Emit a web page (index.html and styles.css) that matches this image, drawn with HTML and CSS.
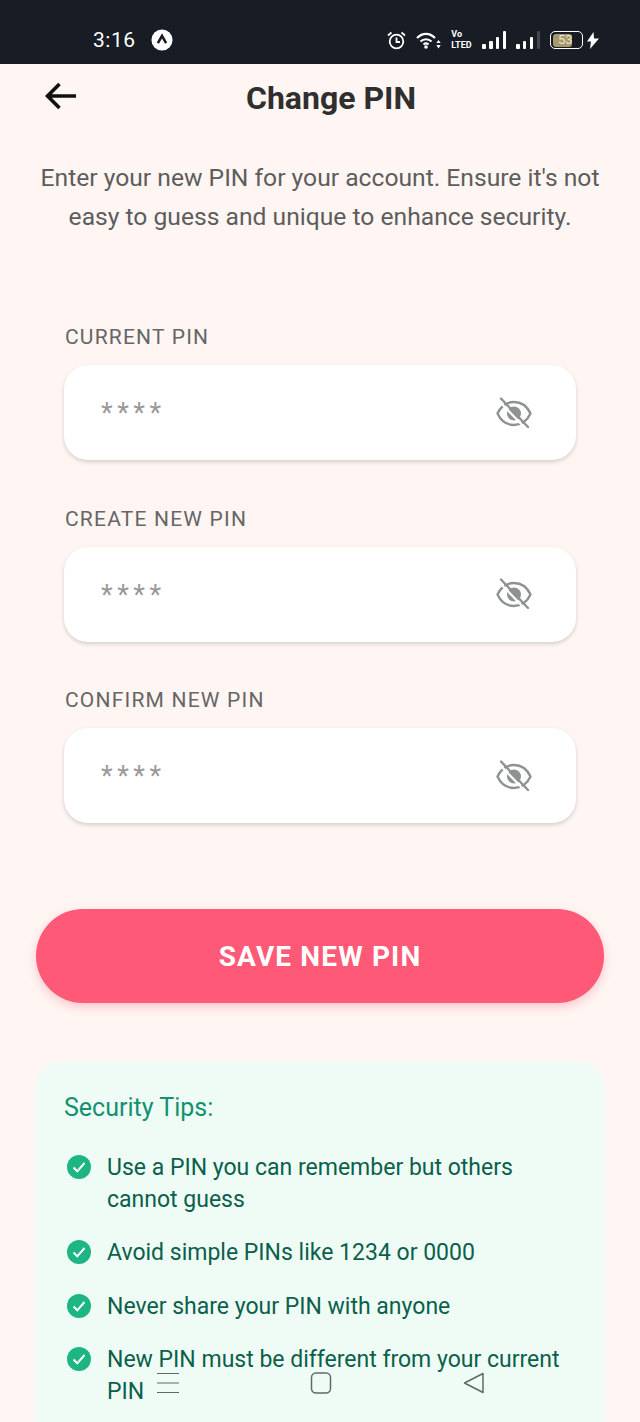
FILE: index.html
```html
<!DOCTYPE html>
<html lang="en">
<head>
  <meta charset="UTF-8">
  <meta name="viewport" content="width=device-width, initial-scale=1.0">
  <title>Change PIN</title>
  <link rel="stylesheet" href="styles.css">
</head>
<body>
  <div class="status-bar">
    <div class="status-left">
      <span class="clock">3:16</span>
      <svg class="status-badge" viewBox="0 0 24 24" width="22" height="22">
        <circle cx="12" cy="12" r="11.5" fill="#fff"/>
        <path d="M7.500 15.500 12 7.500l4.500 8" fill="none" stroke="#181c24" stroke-width="2.800"/>
      </svg>
    </div>
    <div class="status-right">
      <svg viewBox="0 0 19 19" width="19" height="19" fill="none" stroke="#fff" stroke-width="1.800">
        <circle cx="9.500" cy="10.500" r="6.800"/>
        <path d="M9.500 6.500V11H13M1 4.500 4.500 1.500M18 4.500 14.500 1.500"/>
      </svg>
      <svg viewBox="0 0 25 17" width="25" height="17" fill="none" stroke="#fff" stroke-width="2.200">
        <path d="M1 6C6.500 .5 13.500 .5 19 6M4.500 9.500C7.500 6.500 12.500 6.500 15.500 9.500M7.500 12.500c1.500-1.300 3.500-1.300 5 0"/>
        <circle cx="10" cy="15" r="1.800" fill="#fff" stroke="none"/>
        <path d="M22.500 8l2.200 3h-4.400zM22.500 16.500l2.200-3.500h-4.400z" fill="#fff" stroke="none"/>
      </svg>
      <div class="volte">
        <span>Vo</span>
        <span>LTED</span>
      </div>
      <div class="signal">
        <i class="bar-1"></i><i class="bar-2"></i><i class="bar-3"></i><i class="bar-4"></i>
      </div>
      <div class="signal">
        <i class="bar-1"></i><i class="bar-2"></i><i class="bar-3"></i><i class="bar-4 bar-off"></i>
      </div>
      <div class="battery">
        <div class="battery-fill"></div>
        <span class="battery-level">53</span>
      </div>
      <svg class="bolt" viewBox="0 0 12 17" width="12" height="17">
        <path d="M6.500 0 0 9.500h4L3 17 12 6.500H7z" fill="#fff"/>
      </svg>
    </div>
  </div>

  <main class="page">
    <header class="top-bar">
      <svg class="back-icon" viewBox="0 0 32 28" width="32" height="28" fill="none" stroke="#111" stroke-width="3.600">
        <path d="M31 14H3M14.500 2 2.500 14l12 12"/>
      </svg>
      <h1>Change PIN</h1>
    </header>

    <p class="intro">Enter your new PIN for your account. Ensure it's not easy to guess and unique to enhance security.</p>

    <form class="pin-form">
      <div class="field">
        <label>CURRENT PIN</label>
        <div class="pin-input">
          <span class="pin-mask">****</span>
          <svg class="eye-icon" viewBox="0 0 36 32"><use href="#eye-off"/></svg>
        </div>
      </div>
      <div class="field">
        <label>CREATE NEW PIN</label>
        <div class="pin-input">
          <span class="pin-mask">****</span>
          <svg class="eye-icon" viewBox="0 0 36 32"><use href="#eye-off"/></svg>
        </div>
      </div>
      <div class="field">
        <label>CONFIRM NEW PIN</label>
        <div class="pin-input">
          <span class="pin-mask">****</span>
          <svg class="eye-icon" viewBox="0 0 36 32"><use href="#eye-off"/></svg>
        </div>
      </div>
    </form>

    <button class="save-btn" type="button">SAVE NEW PIN</button>

    <section class="tips">
      <h2>Security Tips:</h2>
      <ul>
        <li><svg class="check" viewBox="0 0 24 24"><use href="#check"/></svg><span>Use a PIN you can remember but others cannot guess</span></li>
        <li><svg class="check" viewBox="0 0 24 24"><use href="#check"/></svg><span>Avoid simple PINs like 1234 or 0000</span></li>
        <li><svg class="check" viewBox="0 0 24 24"><use href="#check"/></svg><span>Never share your PIN with anyone</span></li>
        <li><svg class="check" viewBox="0 0 24 24"><use href="#check"/></svg><span>New PIN must be different from your current PIN</span></li>
      </ul>
    </section>
  </main>

  <!-- system nav floats over the page -->
  <div class="nav-bar">
    <svg viewBox="0 0 24 24" width="24" height="24" fill="none" stroke="#5c6b66" stroke-width="1.200">
      <path d="M1 2.500H23M1 12H23M1 21.500H23"/>
    </svg>
    <svg viewBox="0 0 24 24" width="24" height="24" fill="none" stroke="#5c6b66" stroke-width="1.500">
      <rect x="2.500" y="2" width="19" height="20" rx="4.500"/>
    </svg>
    <svg viewBox="0 0 24 24" width="24" height="24" fill="none" stroke="#5c6b66" stroke-width="1.500">
      <path d="M21 2.500V21.500L2.500 12z" stroke-linejoin="round"/>
    </svg>
  </div>

  <svg class="icon-defs" width="0" height="0">
    <symbol id="eye-off" viewBox="0 0 36 32">
      <g fill="none" stroke="#8f9291" stroke-width="2.400">
        <path d="M1.500 16.500C5 9 11 5 18 5S31 9 34.500 16.500C31 24 25 28 18 28S5 24 1.500 16.500z"/>
      </g>
      <circle cx="18" cy="16.500" r="7" fill="#8f9291"/>
      <path d="M2 3 30 32" stroke="#fff" stroke-width="2.200"/>
      <path d="M5 1.500 32 30" stroke="#8f9291" stroke-width="2.400" stroke-linecap="round"/>
    </symbol>
    <symbol id="check" viewBox="0 0 24 24">
      <circle cx="12" cy="12" r="12" fill="#1db584"/>
      <path d="M6.500 12.500 10.300 16.300 17.500 8" fill="none" stroke="#fff" stroke-width="2"/>
    </symbol>
  </svg>
</body>
</html>
```

FILE: styles.css
```css
* {
  box-sizing: border-box;
}

html, body {
  height: 1422px;
}

body {
  margin: 0;
  position: relative;
  overflow: hidden;
  background: #fff5f2;
  font-family: Roboto, "Liberation Sans", sans-serif;
}

.status-bar {
  height: 64px;
  background: #181c24;
  color: #fff;
  display: flex;
  justify-content: space-between;
  align-items: center;
  padding: 16px 41px 0 93px;
}

.status-left {
  display: flex;
  align-items: center;
  gap: 15px;
}

.clock {
  font-size: 21px;
  letter-spacing: 0.5px;
}

.status-right {
  display: flex;
  align-items: center;
  gap: 10px;
}

.volte {
  width: 21px;
  font-size: 9px;
  font-weight: 700;
}

.volte span {
  display: block;
  height: 10.600px;
  line-height: 10.600px;
}

.signal {
  display: flex;
  align-items: flex-end;
  gap: 3.300px;
  height: 18px;
}

.signal i {
  width: 3.500px;
  background: #fff;
  border-radius: 1px;
}

.bar-1 { height: 5px; }
.bar-2 { height: 8px; }
.bar-3 { height: 12px; }
.bar-4 { height: 18px; }
.signal .bar-off { background: #44474c; }

.battery {
  position: relative;
  width: 33px;
  height: 18px;
  border: 1.500px solid #fff;
  border-radius: 5px;
  padding: 1.500px;
  display: flex;
}

.battery-fill {
  width: 68%;
  background: #a8986a;
  border-radius: 3px;
}

.battery-level {
  position: absolute;
  left: 7px;
  top: 0;
  font-size: 13px;
  line-height: 15px;
  color: #e8e4d4;
}

.bolt {
  margin-left: -6px;
}

.page {
  padding: 0 36px;
}

.top-bar {
  position: relative;
  height: 68px;
  display: flex;
  justify-content: center;
  align-items: center;
  padding-left: 22px;
}

.back-icon {
  position: absolute;
  left: 9px;
  top: 18px;
}

.top-bar h1 {
  margin: 0;
  font-size: 32px;
  font-weight: 700;
  color: #2f2f2f;
}

.intro {
  margin: 26px -4px 0;
  font-size: 24.650px;
  line-height: 39px;
  color: #5d5d5d;
  text-align: center;
}

.pin-form {
  margin: 89px 28px 0;
  display: flex;
  flex-direction: column;
  gap: 46.500px;
}

.field label {
  display: block;
  font-size: 21px;
  line-height: 24px;
  letter-spacing: 1.200px;
  color: #666;
  margin-bottom: 16px;
  padding-left: 1px;
}

.pin-input {
  height: 95px;
  background: #fff;
  border-radius: 24px;
  box-shadow: 0 2px 4px rgba(0, 0, 0, 0.16);
  display: flex;
  justify-content: space-between;
  align-items: center;
  padding: 0 44px 0 37px;
}

.pin-mask {
  font-size: 27px;
  letter-spacing: 4.500px;
  color: #999;
  margin-top: 1px;
}

.eye-icon {
  width: 36px;
  height: 32px;
}

.save-btn {
  display: block;
  width: 100%;
  height: 94px;
  margin-top: 86px;
  border: none;
  border-radius: 47px;
  background: #ff5978;
  color: #fff;
  font-family: inherit;
  font-size: 28px;
  font-weight: 700;
  letter-spacing: 1.150px;
  box-shadow: 0 4px 10px rgba(255, 89, 120, 0.3);
}

.tips {
  margin-top: 59px;
  padding: 29px 28px 70px;
  background: #eefcf5;
  border-radius: 24px;
}

.tips h2 {
  margin: 0 0 27px;
  font-size: 25px;
  line-height: 34px;
  font-weight: 400;
  color: #129070;
}

.tips ul {
  margin: 0;
  padding: 0;
  list-style: none;
  display: flex;
  flex-direction: column;
  gap: 21.400px;
}

.tips li {
  display: flex;
  gap: 16px;
  padding-left: 3px;
  font-size: 23px;
  line-height: 32px;
  color: #0b5f4b;
}

.check {
  flex: none;
  width: 24px;
  height: 24px;
  margin-top: 3px;
}

.nav-bar {
  position: absolute;
  left: 156px;
  top: 1371px;
  width: 330px;
  display: flex;
  justify-content: space-between;
}

.icon-defs {
  position: absolute;
}
```
